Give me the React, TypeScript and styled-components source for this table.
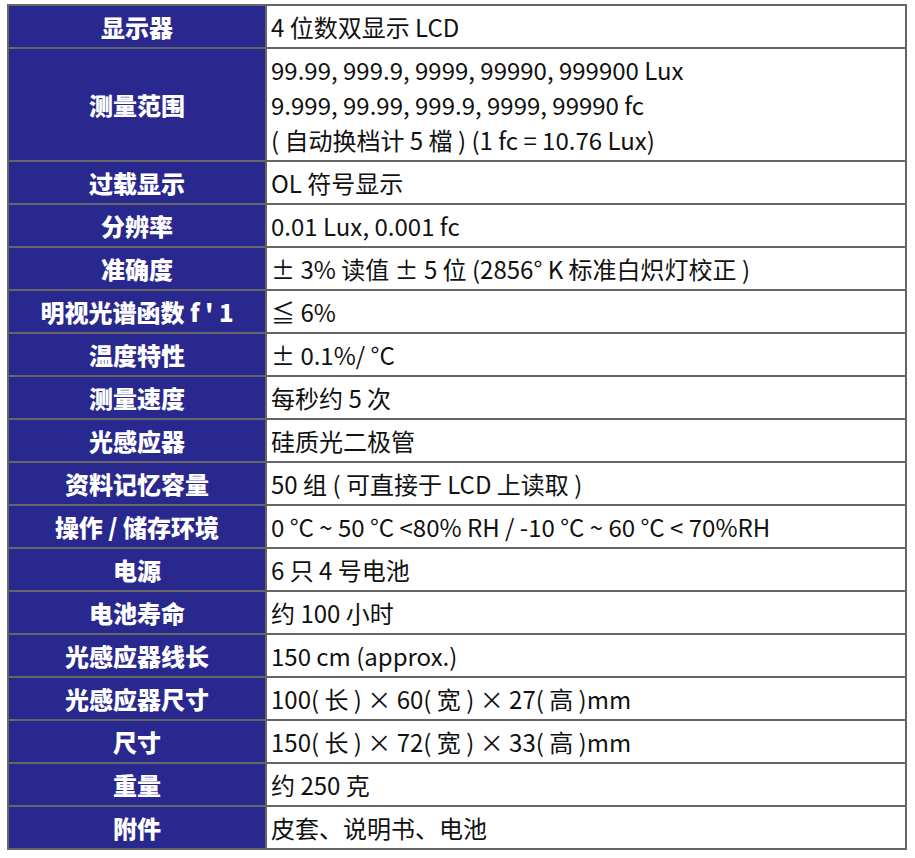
import React from 'react';
import styled, { createGlobalStyle } from 'styled-components';

const GlobalStyle = createGlobalStyle`
  body {
    margin: 0;
    background: #ffffff;
    font-family: 'Noto Sans CJK SC', 'Noto Sans', sans-serif;
  }
`;

const Page = styled.div`
  padding: 4px 0 0 7px;
`;

const SpecTable = styled.table`
  border-collapse: collapse;
  table-layout: fixed;
  width: 900px;
  border: 2px solid #666666;
  font-size: 24px;
  line-height: 35px;
`;

const LabelCell = styled.th`
  width: 248px;
  background: #29288f;
  color: #ffffff;
  font-weight: 900;
  text-align: center;
  padding: 3px 4px;
  border: 2px solid #666666;
  white-space: nowrap;
`;

const ValueCell = styled.td`
  background: #ffffff;
  color: #111111;
  font-weight: 400;
  text-align: left;
  padding: 3px 4px;
  border: 2px solid #666666;
  white-space: nowrap;
`;

type Spec = { label: string; lines: string[] };

const specs: Spec[] = [
  { label: '显示器', lines: ['4 位数双显示 LCD'] },
  {
    label: '测量范围',
    lines: [
      '99.99, 999.9, 9999, 99990, 999900 Lux',
      '9.999, 99.99, 999.9, 9999, 99990 fc',
      '( 自动换档计 5 檔 ) (1 fc = 10.76 Lux)',
    ],
  },
  { label: '过载显示', lines: ['OL 符号显示'] },
  { label: '分辨率', lines: ['0.01 Lux, 0.001 fc'] },
  { label: '准确度', lines: ['± 3% 读值 ± 5 位 (2856° K 标准白炽灯校正 )'] },
  { label: "明视光谱函数 f ' 1", lines: ['≦ 6%'] },
  { label: '温度特性', lines: ['± 0.1%/ °C'] },
  { label: '测量速度', lines: ['每秒约 5 次'] },
  { label: '光感应器', lines: ['硅质光二极管'] },
  { label: '资料记忆容量', lines: ['50 组 ( 可直接于 LCD 上读取 )'] },
  { label: '操作 / 储存环境', lines: ['0 °C ~ 50 °C <80% RH / -10 °C ~ 60 °C < 70%RH'] },
  { label: '电源', lines: ['6 只 4 号电池'] },
  { label: '电池寿命', lines: ['约 100 小时'] },
  { label: '光感应器线长', lines: ['150 cm (approx.)'] },
  { label: '光感应器尺寸', lines: ['100( 长 ) × 60( 宽 ) × 27( 高 )mm'] },
  { label: '尺寸', lines: ['150( 长 ) × 72( 宽 ) × 33( 高 )mm'] },
  { label: '重量', lines: ['约 250 克'] },
  { label: '附件', lines: ['皮套、说明书、电池'] },
];

const App: React.FC = () => (
  <>
    <GlobalStyle />
    <Page>
      <SpecTable>
        <tbody>
          {specs.map((s) => (
            <tr key={s.label}>
              <LabelCell>{s.label}</LabelCell>
              <ValueCell>
                {s.lines.map((l, i) => (
                  <div key={i}>{l}</div>
                ))}
              </ValueCell>
            </tr>
          ))}
        </tbody>
      </SpecTable>
    </Page>
  </>
);

export default App;
